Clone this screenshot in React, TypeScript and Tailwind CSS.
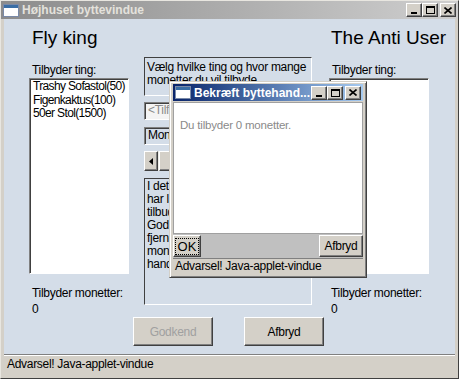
import React from 'react';

const font = "font-['Liberation_Sans',Arial,sans-serif]";

// classic 3d borders
const raised =
  'border border-t-white border-l-white border-r-[#404040] border-b-[#404040] shadow-[inset_-1px_-1px_#808080]';
const sunken =
  'border border-t-[#808080] border-l-[#808080] border-r-white border-b-white shadow-[inset_1px_1px_#404040]';

function CaptionButtons() {
  return (
    <div className="flex items-center gap-0">
      <div className={`${raised} bg-[#d4d0c8] w-[16px] h-[14px] flex items-end justify-center pb-[2px]`}>
        <div className="w-[6px] h-[2px] bg-black" />
      </div>
      <div className={`${raised} bg-[#d4d0c8] w-[16px] h-[14px] flex items-center justify-center`}>
        <div className="w-[9px] h-[8px] border border-black border-t-2" />
      </div>
      <div className={`${raised} bg-[#d4d0c8] w-[16px] h-[14px] ml-[2px] flex items-center justify-center`}>
        <svg width="8" height="7" viewBox="0 0 8 7">
          <path d="M0.5 0.5 L7.5 6.5 M7.5 0.5 L0.5 6.5" stroke="#000" strokeWidth="1.6" />
        </svg>
      </div>
    </div>
  );
}

function WinIcon() {
  return (
    <div className="w-[16px] h-[13px] bg-white border border-[#7a8aa8] flex flex-col">
      <div className="h-[3px] bg-[#3a6ea5]" />
    </div>
  );
}

function ConfirmDialog() {
  return (
    <div
      className={`absolute left-[168px] top-[80px] w-[198px] h-[197px] bg-[#d4d0c8] border border-t-[#d4d0c8] border-l-[#d4d0c8] border-r-[#404040] border-b-[#404040] shadow-[inset_1px_1px_#ffffff,inset_-1px_-1px_#808080] px-[3px] pt-[2px] flex flex-col`}
    >
      <div className="h-[17px] bg-gradient-to-r from-[#0a246a] to-[#a6caf0] flex items-center pl-[2px] pr-[2px]">
        <WinIcon />
        <span className="ml-[3px] text-[12px] font-bold text-white leading-none whitespace-nowrap flex-1">
          Bekræft byttehand...
        </span>
        <CaptionButtons />
      </div>
      <div className="mt-[1px] h-[132px] bg-white border border-[#a0a0a0] pl-[6px] pt-[15px]">
        <p className="text-[11.5px] leading-[14px] text-[#8a8a8a] tracking-[-0.2px]">Du tilbyder 0 monetter.</p>
      </div>
      <div className="h-[24px] bg-[#c0c0c0] flex items-start justify-between pt-[1px]">
        <div className={`${raised} bg-[#d4d0c8] w-[28px] h-[22px] flex items-center justify-center`}>
          <span className="border border-dotted border-black px-[2px] text-[13px] leading-[15px]">OK</span>
        </div>
        <div className={`${raised} bg-[#d4d0c8] w-[44px] h-[22px] flex items-center justify-center text-[12px] tracking-[-0.3px]`}>
          Afbryd
        </div>
      </div>
      <div className="h-[16px] bg-[#d4d0c8] border-t border-[#808080] pl-[2px] text-[12px] leading-[15px] tracking-[-0.3px] whitespace-nowrap">
        Advarsel! Java-applet-vindue
      </div>
    </div>
  );
}

export default function App() {
  return (
    <div className={`${font} relative w-[459px] h-[379px] bg-[#d4d0c8] border border-t-[#e8e6e0] border-l-[#e8e6e0] border-r-[#404040] border-b-[#404040] flex flex-col text-black overflow-hidden`}>
      {/* title bar */}
      <div className="h-[18px] bg-gradient-to-r from-[#8c8c8c] to-[#cfcfcf] flex items-center pl-[2px] pr-[2px]">
        <WinIcon />
        <span className="ml-[3px] text-[12px] font-bold text-[#e4e2dc] leading-none flex-1 whitespace-nowrap">
          Højhuset byttevindue
        </span>
        <CaptionButtons />
      </div>

      {/* body */}
      <div className="ml-[3px] mr-[3px] h-[335px] bg-[#d4dde8] flex flex-col">
        <div className="h-[298px] flex">
          {/* left player */}
          <div className="ml-[25px] w-[100px] pt-[8px] flex flex-col">
            <div className="pl-[3px] text-[19px] leading-[22px] whitespace-nowrap">Fly king</div>
            <div className="mt-[14px] pl-[3px] text-[12px] leading-[14px] tracking-[-0.3px]">Tilbyder ting:</div>
            <div className={`${sunken} mt-[1px] h-[198px] bg-white pl-[3px] pt-[1px] text-[12px] leading-[13.5px] tracking-[-0.65px] whitespace-nowrap overflow-hidden`}>
              <div>Trashy Sofastol(50)</div>
              <div>Figenkaktus(100)</div>
              <div>50er Stol(1500)</div>
            </div>
            <div className="mt-[11px] pl-[3px] text-[12px] leading-[16px] tracking-[-0.3px] whitespace-nowrap">
              <div>Tilbyder monetter:</div>
              <div>0</div>
            </div>
          </div>

          {/* middle */}
          <div className="ml-[15px] w-[168px] pt-[38px] flex flex-col text-[12px] tracking-[-0.3px]">
            <div className="h-[39px] border border-t-[#404040] border-l-[#404040] border-r-white border-b-white pl-[2px] pt-[3px] leading-[13px]">
              Vælg hvilke ting og hvor mange monetter du vil tilbyde
            </div>
            <div className={`${sunken} mt-[6px] h-[18px] bg-[#f4f4f4] pl-[3px] leading-[15px] text-[#8a8a8a]`}>
              &lt;Tilføj ting&gt;
            </div>
            <div className={`${sunken} mt-[7px] h-[18px] pl-[3px] leading-[15px]`}>Monetter: 0</div>
            <div className="mt-[6px] h-[20px] bg-[#ebebe6] flex">
              <div className={`${raised} bg-[#d4d0c8] w-[14px] h-[20px] flex items-center justify-center`}>
                <svg width="4" height="7" viewBox="0 0 4 7">
                  <path d="M4 0 L0 3.5 L4 7 Z" fill="#000" />
                </svg>
              </div>
              <div className={`${raised} ml-[1px] bg-[#d4d0c8] w-[20px] h-[20px]`} />
            </div>
            <div className="mt-[7px] h-[127px] border border-t-[#404040] border-l-[#404040] border-r-white border-b-white pl-[2px] pt-[1px] leading-[13px] whitespace-nowrap">
              <div>I dette felt kan du se</div>
              <div>har lagt i handlen.</div>
              <div>tilbuddet er klar, så tryk</div>
              <div>Godkend. For at</div>
              <div>fjerne ting eller</div>
              <div>monetter fra</div>
              <div>handlen, klik på dem.</div>
            </div>
          </div>

          {/* right player */}
          <div className="ml-[17px] w-[122px] pt-[8px] flex flex-col">
            <div className="pl-[2px] text-[19px] leading-[22px] whitespace-nowrap">The Anti User</div>
            <div className="mt-[14px] pl-[3px] text-[12px] leading-[14px] tracking-[-0.3px]">Tilbyder ting:</div>
            <div className={`${sunken} mt-[1px] w-[100px] h-[198px] bg-white`} />
            <div className="mt-[11px] pl-[2px] text-[12px] leading-[16px] tracking-[-0.3px] whitespace-nowrap">
              <div>Tilbyder monetter:</div>
              <div>0</div>
            </div>
          </div>
        </div>

        {/* buttons */}
        <div className="flex">
          <div className={`${raised} ml-[129px] w-[80px] h-[29px] bg-[#d4d0c8] flex items-center justify-center text-[12px] tracking-[-0.3px] text-[#a0a0a0]`}>
            Godkend
          </div>
          <div className={`${raised} ml-[31px] w-[80px] h-[29px] bg-[#d4d0c8] flex items-center justify-center text-[12px] tracking-[-0.3px]`}>
            Afbryd
          </div>
        </div>
      </div>

      {/* status bar */}
      <div className="mx-[3px] h-[20px] bg-[#d4d0c8] border-t border-[#808080] shadow-[inset_0_1px_#ffffff] pl-[3px] pt-[2px] text-[12px] leading-[15px] tracking-[-0.3px]">
        Advarsel! Java-applet-vindue
      </div>

      <ConfirmDialog />
    </div>
  );
}
